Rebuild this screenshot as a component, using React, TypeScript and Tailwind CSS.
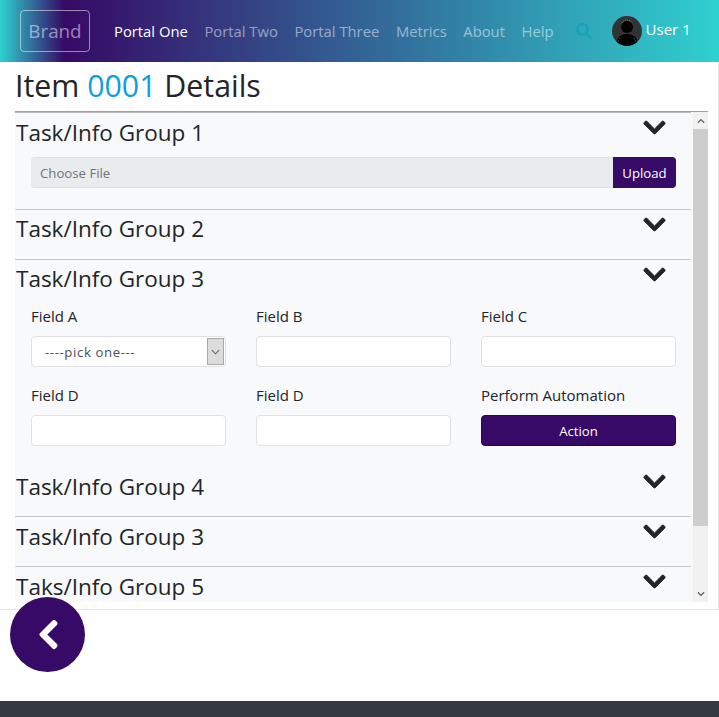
import { FaChevronDown, FaChevronLeft, FaChevronUp, FaSearch } from "react-icons/fa";

const navItems = ["Portal Two", "Portal Three", "Metrics", "About", "Help"];

function GroupHeader({ title, tight = false }: { title: string; tight?: boolean }) {
  return (
    <div className="flex justify-between pl-px pr-6">
      <h4 className="text-[22.5px] leading-[29px] text-[#212529]">{title}</h4>
      <FaChevronDown
        className={`text-[#212529] ${tight ? "-mt-[2px]" : "-mt-[3px]"}`}
        size={25}
        stroke="currentColor"
        strokeWidth={16}
      />
    </div>
  );
}

function Field({ label, children }: { label: string; children: React.ReactNode }) {
  return (
    <div className="flex w-[195px] flex-col">
      <label className="mb-2 text-[15px] leading-[24px] text-[#212529]">{label}</label>
      {children}
    </div>
  );
}

function TextInput() {
  return <input className="h-[31px] w-full rounded-[4px] border border-[#dee2e6] bg-white" />;
}

export default function App() {
  return (
    <div className="relative flex h-[717px] flex-col overflow-hidden bg-white font-['Open_Sans',sans-serif]">
      {/* Navbar */}
      <nav className="flex h-[62px] items-center bg-[linear-gradient(to_right,#2ed1d1_0px,#360a66_64px,#2fd0d0_100%)] pl-5">
        <a className="flex h-[42px] w-[70px] items-center justify-center rounded-[4px] border border-white/50 text-[18.8px] text-white/50">Brand</a>
        <div className="ml-6 flex items-center gap-[16.6px] text-[14.8px]">
          <a className="text-white">Portal One</a>
          {navItems.map((item) => (
            <a key={item} className="text-white/50">{item}</a>
          ))}
        </div>
        <FaSearch className="ml-[22px] text-[#17a2b8]" size={16} />
        <div className="ml-5 h-[30px] w-[30px] overflow-hidden rounded-full bg-[#333]">
          <svg viewBox="0 0 30 30" width="30" height="30">
            <circle cx="15" cy="11" r="6" fill="#000" />
            <path d="M4 30c0-8 4-12 11-12s11 4 11 12z" fill="#000" />
            <path d="M10 7c1-2 3-3 5-3s4 1 5 3M8 22l-2 4M22 22l2 4" fill="none" stroke="#4fd8c8" strokeWidth="0.6" strokeDasharray="1 1" />
          </svg>
        </div>
        <span className="mb-1 ml-1 text-[15px] text-white">User 1</span>
      </nav>

      {/* Main */}
      <main className="flex h-[548px] flex-col border-r border-b border-[#e5e5e5] pl-[15px]">
        <h1 className="h-[49px] text-[30.3px] leading-[47px] text-[#212529]">
          Item <span className="text-[#0d9fe0]">0001</span> Details
        </h1>
        <div className="flex h-[491px] w-[693px] border-t border-t-[#7ea6e0] bg-[#f8f9fa]">
          <div className="w-[676px] overflow-hidden">
            <section className="h-[98px] border-t border-t-[#b9b9b9] border-b border-b-[#c4c6c9] pt-[5px]">
              <GroupHeader title="Task/Info Group 1" />
              <div className="mx-4 mt-[10px] flex h-[31px] w-[645px]">
                <div className="flex flex-1 items-center rounded-l-[4px] border-y border-[#dee2e6] bg-[#e9ecef] pl-[9px] pt-[2px] text-[13.2px] text-[#6c757d]">Choose File</div>
                <button className="w-[63px] rounded-r-[4px] bg-[#360a66] pt-[2px] text-[13.2px] text-white">Upload</button>
              </div>
            </section>
            <section className="h-[50px] border-b border-[#c4c6c9] pt-1">
              <GroupHeader title="Task/Info Group 2" tight />
            </section>
            <section className="h-[207px] pt-1">
              <GroupHeader title="Task/Info Group 3" tight />
              <div className="mx-4 mt-[11px] grid grid-cols-[195px_195px_195px] gap-x-[30px] gap-y-4">
                <Field label="Field A">
                  <div className="flex h-[31px] w-full items-center rounded-[4px] border border-[#dee2e6] bg-white pl-[13px] pr-[1px] text-[13.2px] text-[#495057]">
                    <span className="flex-1 pt-[2px] tracking-[0.6px]">----pick one---</span>
                    <span className="flex h-[27px] w-[17px] items-center justify-center border border-[#a9a9a9] bg-[#dcdcdc]">
                      <svg viewBox="0 0 10 6" width="9" height="6" fill="none" stroke="#666" strokeWidth="1.2">
                        <polyline points="1,1 5,5 9,1" />
                      </svg>
                    </span>
                  </div>
                </Field>
                <Field label="Field B"><TextInput /></Field>
                <Field label="Field C"><TextInput /></Field>
                <Field label="Field D"><TextInput /></Field>
                <Field label="Field D"><TextInput /></Field>
                <Field label="Perform Automation">
                  <button className="h-[31px] w-full rounded-[4px] border border-[#24064a] bg-[#360a66] pt-[2px] text-[13.2px] text-white">Action</button>
                </Field>
              </div>
            </section>
            <section className="h-[50px] border-b border-[#c4c6c9] pt-[5px]">
              <GroupHeader title="Task/Info Group 4" />
            </section>
            <section className="h-[50px] border-b border-[#c4c6c9] pt-[5px]">
              <GroupHeader title="Task/Info Group 3" />
            </section>
            <section className="h-[35px] overflow-hidden pt-[5px]">
              <GroupHeader title="Taks/Info Group 5" />
            </section>
          </div>
          {/* Scrollbar */}
          <div className="ml-[2px] flex w-[15px] flex-col bg-[#f1f1f1]">
            <div className="flex h-[17px] items-center justify-center text-[#606060]"><FaChevronUp size={8} /></div>
            <div className="h-[397px] bg-[#cdcdcd]" />
            <div className="mt-auto flex h-[16px] items-center justify-center text-[#606060]"><FaChevronDown size={8} /></div>
          </div>
        </div>
      </main>

      {/* Back button */}
      <button className="absolute left-[10px] top-[597px] flex h-[75px] w-[75px] items-center justify-center rounded-full bg-[#360a66] pl-px text-white">
        <FaChevronLeft size={33} stroke="currentColor" strokeWidth={16} />
      </button>

      <footer className="mt-auto h-4 bg-[#343a40]" />
    </div>
  );
}
